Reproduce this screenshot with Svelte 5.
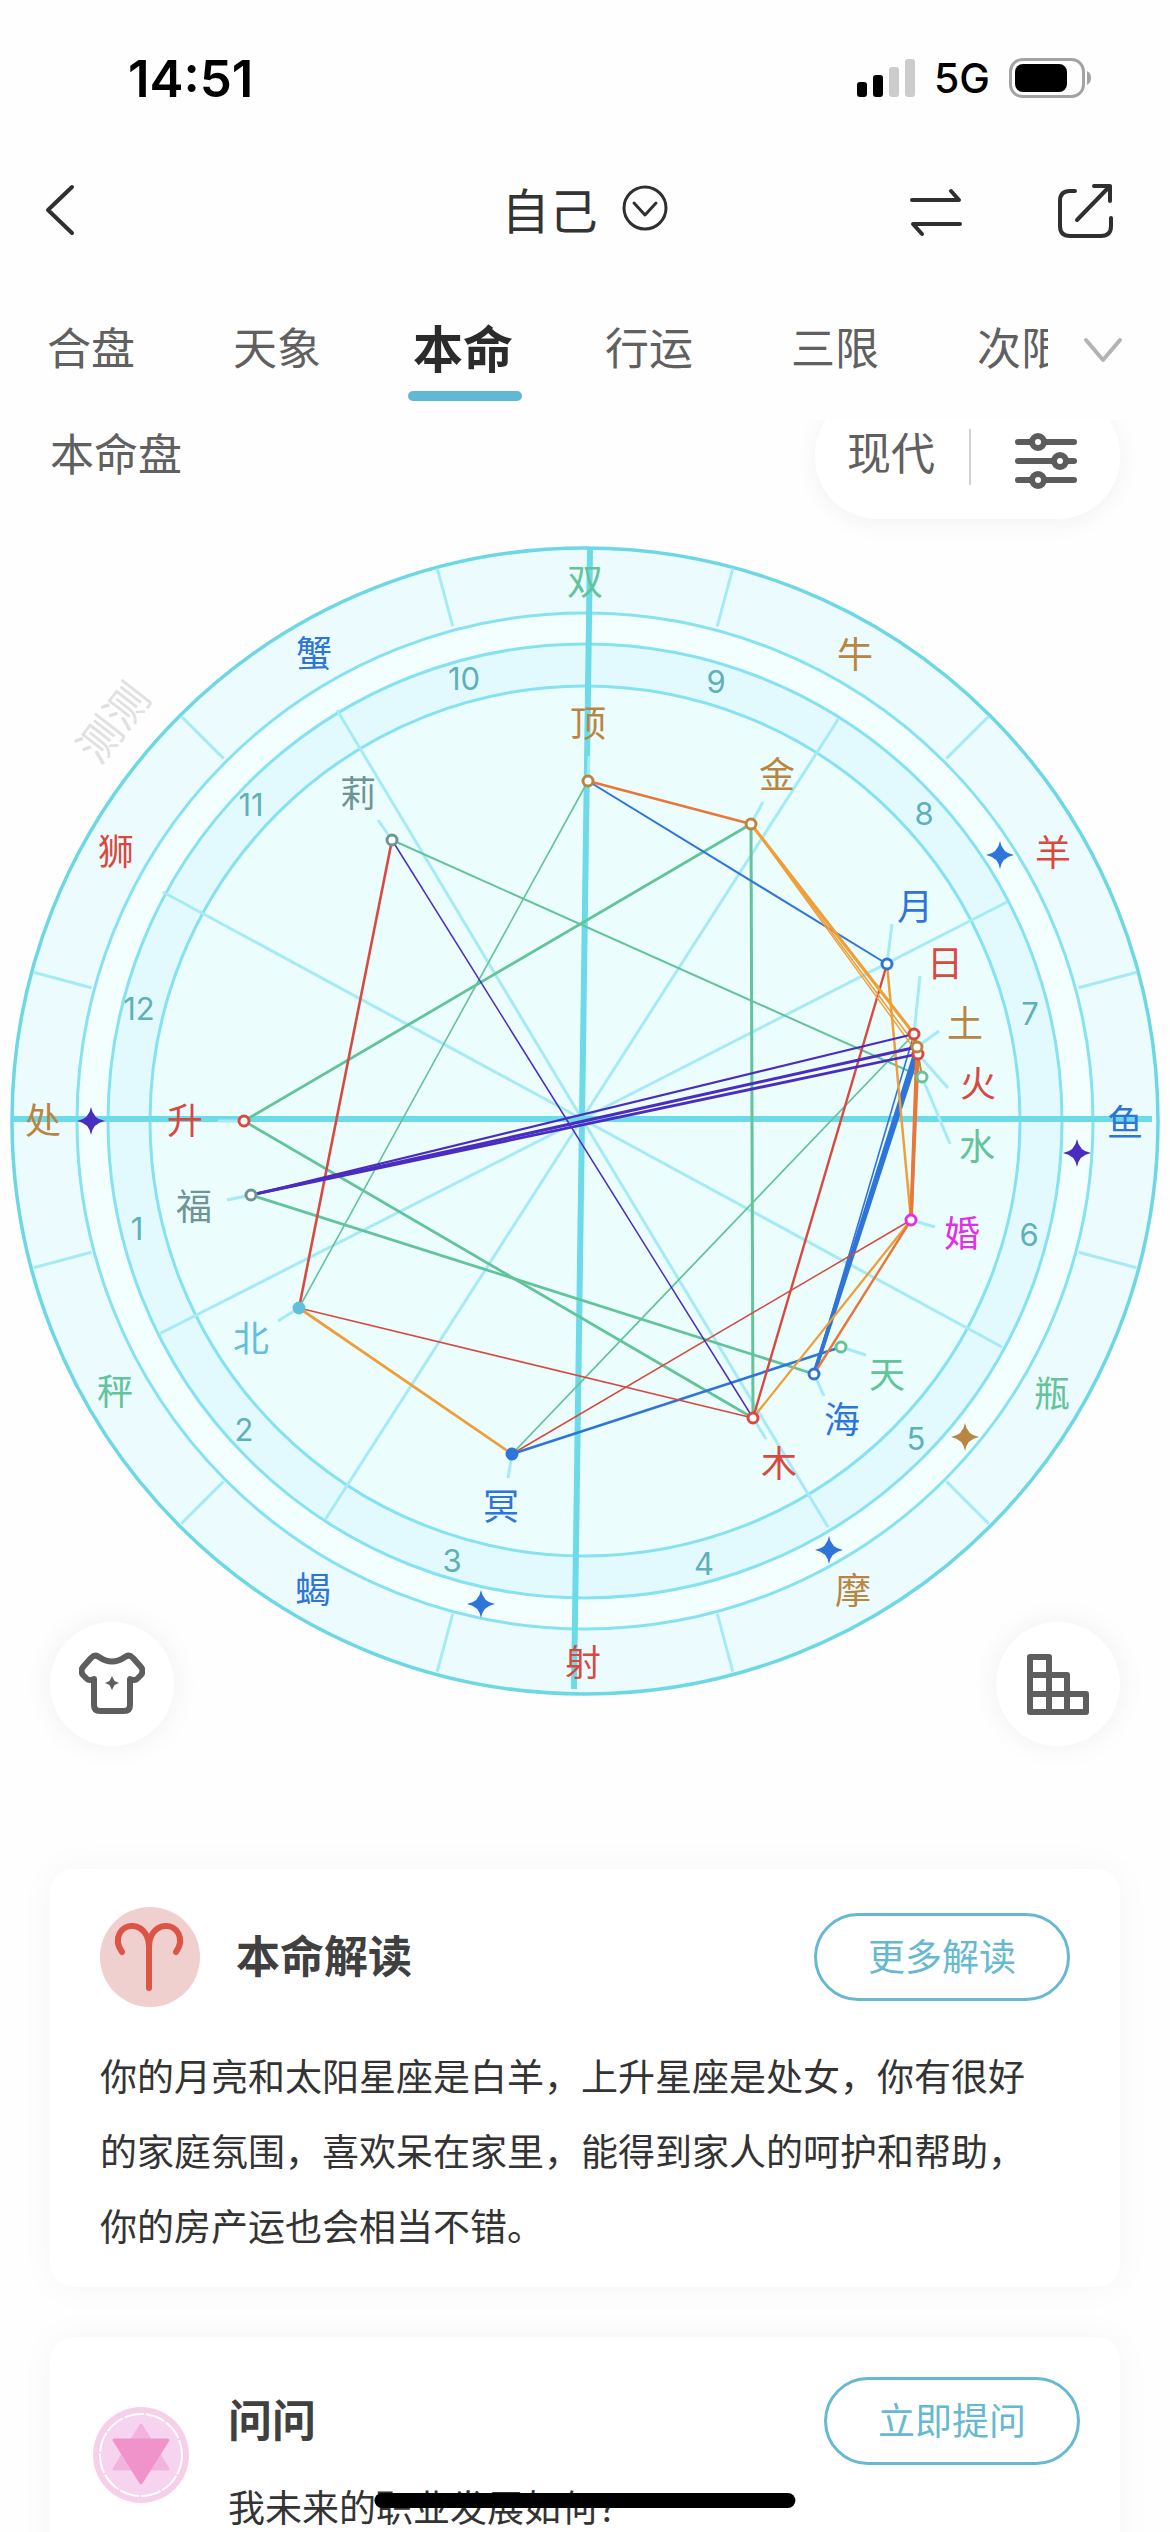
<script>
  const tabs = ['合盘', '天象', '本命', '行运', '三限', '次限'];
  let active = $state('本命');

  const C = {
    red: '#d9493f', blue: '#2f74d8', green: '#63c39a', brown: '#b98642',
    grey: '#6f9496', sky: '#62bfdc', pink: '#e22fe8', indigo: '#4a2dc0',
    orange: '#ee9f38', flame: '#ea7638'
  };

  const cx = 585, cy = 1121;
  const ticks = Array.from({ length: 12 }, (_, i) => {
    const a = ((15 + i * 30) * Math.PI) / 180;
    return [cx + 511 * Math.cos(a), 1120 + 511 * Math.sin(a), cx + 571 * Math.cos(a), 1120 + 571 * Math.sin(a)];
  });

  const cusps = [
    [337, 710], [163, 892], [839, 718], [1007, 902],
    [159, 1334], [325, 1520], [828, 1527], [1002, 1347]
  ];

  const signs = [
    ['双', 585, 582, C.green], ['蟹', 314, 654, C.blue], ['牛', 855, 655, C.brown],
    ['羊', 1053, 853, C.red], ['鱼', 1125, 1123, C.blue], ['瓶', 1052, 1394, C.green],
    ['摩', 853, 1591, C.brown], ['射', 583, 1663, C.red], ['蝎', 313, 1590, C.blue],
    ['秤', 115, 1392, C.green], ['处', 43, 1121, C.brown], ['狮', 116, 852, C.red]
  ];

  const houses = [
    [137, 1229], [244, 1430], [452, 1561], [704, 1564], [916, 1439], [1029, 1235],
    [1030, 1014], [924, 814], [716, 682], [464, 679], [251, 805], [139, 1009]
  ];

  // name: [node x, node y, stub x, stub y, label x, label y, colour, filled]
  const planets = {
    顶: [588, 781, 589, 756, 588, 724, C.brown],
    金: [751, 824, 763, 802, 777, 775, C.brown],
    月: [887, 964, 892, 924, 915, 907, C.blue],
    日: [914, 1034, 920, 976, 945, 964, C.red],
    火: [918, 1054, 948, 1088, 978, 1084, C.red],
    土: [917, 1047, 939, 1031, 965, 1024, C.brown],
    水: [922, 1077, 950, 1144, 977, 1147, C.green],
    升: [244, 1121, 218, 1121, 185, 1121, C.red],
    福: [251, 1195, 227, 1200, 194, 1207, C.grey],
    北: [299, 1308, 278, 1321, 251, 1339, C.sky, true],
    冥: [512, 1454, 508, 1478, 501, 1507, C.blue, true],
    莉: [392, 840, 378, 820, 358, 794, C.grey],
    婚: [911, 1220, 935, 1227, 962, 1234, C.pink],
    天: [841, 1347, 866, 1355, 887, 1375, C.green],
    海: [814, 1374, 824, 1396, 842, 1420, C.blue],
    木: [753, 1418, 766, 1439, 779, 1464, C.red]
  };

  const aspects = [
    ['顶', '北', C.green, 1.6], ['升', '金', C.green, 2.8], ['金', '木', C.green, 3],
    ['莉', '水', C.green, 2], ['升', '木', C.green, 2.8], ['福', '海', C.green, 2.8],
    ['冥', '日', C.green, 1.8], ['顶', '月', C.blue, 2], ['冥', '天', C.blue, 2.6],
    ['海', '日', C.blue, 1.6], ['海', '土', C.blue, 3.8], ['海', '火', C.blue, 3.8],
    ['莉', '北', C.red, 2.6], ['月', '木', C.red, 2.4], ['北', '木', C.red, 1.7],
    ['冥', '婚', C.red, 1.5], ['北', '冥', C.orange, 2.8], ['金', '日', C.orange, 3.2],
    ['金', '土', C.orange, 1.6], ['金', '火', C.orange, 1.4], ['月', '婚', C.orange, 2.5],
    ['婚', '木', C.orange, 2.3], ['顶', '金', C.flame, 2.4], ['婚', '海', C.flame, 2.4],
    ['婚', '土', C.flame, 3.4], ['婚', '火', C.flame, 3.4], ['日', '火', C.flame, 4],
    ['土', '水', C.brown, 2], ['莉', '木', C.indigo, 1.5], ['福', '日', C.indigo, 2.2],
    ['福', '土', C.indigo, 3], ['福', '火', C.indigo, 2.8]
  ];

  const stars = [
    [91, 1121, C.indigo], [1000, 855, C.blue], [1077, 1153, C.indigo],
    [965, 1437, C.brown], [829, 1550, C.blue], [481, 1604, C.blue]
  ];
  const star = 'M0-14Q2-2 14 0Q2 2 0 14Q-2 2-14 0Q-2-2 0-14Z';
</script>

<div class="app">
  <header class="status">
    <time>14:51</time>
    <div class="signals">
      <svg width="58" height="38" viewBox="0 0 58 38" aria-hidden="true">
        <rect x="0" y="23" width="10" height="15" rx="3" />
        <rect x="16" y="16" width="10" height="22" rx="3" />
        <rect x="32" y="8" width="10" height="30" rx="3" fill="#ccc" />
        <rect x="48" y="0" width="10" height="38" rx="3" fill="#ccc" />
      </svg>
      <span>5G</span>
      <svg width="83" height="40" viewBox="0 0 83 40" aria-hidden="true">
        <rect x="1.5" y="1.5" width="73" height="37" rx="12" fill="none" stroke="#a3a3a3" stroke-width="3" />
        <rect x="6" y="6" width="52" height="28" rx="8" />
        <path d="M78 13q4 2 4 7t-4 7z" fill="#a3a3a3" />
      </svg>
    </div>
  </header>

  <nav class="bar">
    <button class="icon" aria-label="返回">
      <svg width="32" height="52" viewBox="0 0 32 52"><path d="M28 3L4 26L28 49" /></svg>
    </button>
    <button class="who">
      <span>自己</span>
      <svg width="46" height="46" viewBox="0 0 46 46"><circle cx="23" cy="23" r="21" /><path d="M12 18L23 30L34 18" /></svg>
    </button>
    <div class="actions">
      <button class="icon swap" aria-label="切换">
        <svg width="54" height="50" viewBox="0 0 54 50"><path d="M3 13H50L42 4M51 37H4L13 47" /></svg>
      </button>
      <button class="icon" aria-label="分享">
        <svg width="60" height="60" viewBox="0 0 60 60"><path d="M20 11H15Q5 11 5 21V46Q5 56 15 56H46Q56 56 56 46V38M39 6H55V21M54 7L22 40" /></svg>
      </button>
    </div>
  </nav>

  <div class="tabs">
    <div class="list" role="tablist">
      {#each tabs as tab}
        <button role="tab" class:on={tab === active} aria-selected={tab === active} onclick={() => (active = tab)}>{tab}</button>
      {/each}
    </div>
    <button class="icon more" aria-label="展开">
      <svg width="42" height="28" viewBox="0 0 42 28"><path d="M4 4L21 24L38 4" /></svg>
    </button>
  </div>

  <section class="sub">
    <h1>本命盘</h1>
    <div class="pill">
      <button>现代</button>
      <i></i>
      <button class="icon" aria-label="设置">
        <svg width="62" height="56" viewBox="0 0 62 56">
          <path d="M3 9H59M3 28H59M3 47H59" />
          <g fill="#fff"><circle cx="23" cy="9" r="6" /><circle cx="45" cy="28" r="6" /><circle cx="23" cy="47" r="6" /></g>
        </svg>
      </button>
    </div>
  </section>

  <section class="chart">
    <svg viewBox="0 530 1170 1240" role="img" aria-label="本命盘">
      <text class="mark" transform="translate(114 723) rotate(-52)" y="15">测测</text>
      <circle {cx} {cy} r="573" fill="#ecfcfe" stroke="#6dd7e4" stroke-width="3.5" />
      <circle {cx} {cy} r="508" fill="#f3ffff" stroke="#86e1f1" stroke-width="3" />
      <circle {cx} {cy} r="477" fill="#e2fafe" stroke="#86e1f1" stroke-width="3" />
      <circle {cx} {cy} r="435" fill="#ecfdfe" stroke="#86e1f1" stroke-width="3" />
      <g stroke="#a6eaf5" stroke-width="3">
        {#each ticks as [x1, y1, x2, y2]}<line {x1} {y1} {x2} {y2} />{/each}
        {#each cusps as [x, y]}<line x1="582" y1="1119" x2={x} y2={y} />{/each}
      </g>
      <path d="M13 1119H1152M590 549L574 1689" stroke="#6cdae8" stroke-width="6" />
      <g stroke="#a6eaf5" stroke-width="3">
        {#each Object.values(planets) as p}<line x1={p[0]} y1={p[1]} x2={p[2]} y2={p[3]} />{/each}
      </g>
      {#each aspects as [a, b, color, w]}
        <line x1={planets[a][0]} y1={planets[a][1]} x2={planets[b][0]} y2={planets[b][1]} stroke={color} stroke-width={w} />
      {/each}
      {#each Object.entries(planets) as [name, p]}
        <circle cx={p[0]} cy={p[1]} r="5" fill={p[7] ? p[6] : '#fff'} stroke={p[6]} stroke-width="3" />
        <text x={p[4]} y={p[5] + 13} fill={p[6]}>{name}</text>
      {/each}
      {#each signs as [name, x, y, color]}<text {x} y={y + 13} fill={color}>{name}</text>{/each}
      {#each houses as [x, y], i}<text class="num" {x} y={y + 11}>{i + 1}</text>{/each}
      {#each stars as [x, y, color]}<path d={star} transform="translate({x} {y})" fill={color} />{/each}
    </svg>
    <div class="tools">
      <button class="round" aria-label="换肤">
        <svg width="66" height="66" viewBox="0 0 66 66">
          <path d="M20 6Q33 15 46 6Q50 3 54 7L62 16Q65 20 62 24L58 28Q56 30 51 28V54Q51 60 45 60H21Q15 60 15 54V28Q10 30 8 28L4 24Q1 20 4 16L12 7Q16 3 20 6Z" />
          <path class="solid" d="M33 25L35.500 30L40 32L35.500 34L33 39L30.500 34L26 32L30.500 30Z" />
        </svg>
      </button>
      <button class="round" aria-label="表格">
        <svg width="62" height="62" viewBox="0 0 62 62"><path d="M3 4H22V59H3ZM3 22H40V59H3ZM3 41H59V59H3Z" /></svg>
      </button>
    </div>
  </section>

  <main>
    <article class="card">
      <div class="head">
        <svg width="100" height="100" viewBox="0 0 100 100" aria-hidden="true">
          <circle cx="50" cy="50" r="50" fill="#f0cfcf" />
          <path d="M22 45C12 31 22 18 33 19C44 20 49 30 49 40V81M49 40C49 30 54 20 65 19C76 18 86 31 76 45" fill="none" stroke="#dc5445" stroke-width="6" stroke-linecap="round" />
        </svg>
        <h2>本命解读</h2>
        <button class="cta">更多解读</button>
      </div>
      <p>你的月亮和太阳星座是白羊，上升星座是处女，你有很好的家庭氛围，喜欢呆在家里，能得到家人的呵护和帮助，你的房产运也会相当不错。</p>
    </article>

    <article class="card ask">
      <svg class="badge" width="96" height="96" viewBox="0 0 96 96" aria-hidden="true">
        <circle cx="48" cy="48" r="48" fill="#f5d0e8" />
        <circle cx="48" cy="48" r="41" fill="#f6d3ee" stroke="#fff" stroke-width="2" stroke-dasharray="20 2" />
        <g stroke-width="3" stroke-linejoin="round">
          <path d="M48 18L75 62H21Z" fill="#f1b4dc" stroke="#f1b4dc" />
          <path d="M48 76L21 33H75Z" fill="#ef93ca" stroke="#ef93ca" />
        </g>
      </svg>
      <div class="body">
        <div class="head">
          <h2>问问</h2>
          <button class="cta">立即提问</button>
        </div>
        <p>我未来的职业发展如何？</p>
      </div>
    </article>
  </main>

  <div class="home"></div>
</div>

<style>
  :global(body) { margin: 0; background: #fff; }
  .app {
    position: relative;
    height: 100vh;
    overflow: hidden;
    background: #fefefe;
    color: #333;
    font-family: "Noto Sans CJK SC", sans-serif;
  }
  button {
    padding: 0;
    border: 0;
    background: none;
    color: inherit;
    font: inherit;
    cursor: pointer;
  }
  svg { display: block; flex: none; }
  h1, h2, p { margin: 0; font-weight: 400; }
  .icon svg, .who svg, .round svg {
    fill: none;
    stroke: #2f2f2f;
    stroke-width: 4;
    stroke-linecap: round;
    stroke-linejoin: round;
  }

  .status {
    display: flex;
    justify-content: space-between;
    align-items: center;
    height: 156px;
    padding: 0 78px 0 128px;
    color: #000;
    font-family: Inter, sans-serif;
  }
  time { font-size: 51px; font-weight: 600; }
  .signals { display: flex; align-items: center; gap: 19px; font-size: 41px; font-weight: 500; }

  .bar {
    display: grid;
    grid-template-columns: 1fr auto 1fr;
    align-items: center;
    height: 108px;
    padding: 0 55px 0 44px;
  }
  .bar > .icon { justify-self: start; }
  .who { display: flex; align-items: center; gap: 24px; padding: 0 0 4px 10px; font-size: 48px; line-height: 60px; }
  .who svg { stroke-width: 3; }
  .actions { display: flex; align-items: center; justify-content: flex-end; gap: 92px; }
  .swap { padding-top: 4px; }

  .tabs {
    position: relative;
    z-index: 1;
    display: flex;
    align-items: center;
    height: 156px;
    background: #fefefe;
  }
  .list { display: flex; flex: 1; overflow: hidden; }
  .list button {
    position: relative;
    flex: 0 0 186px;
    height: 156px;
    padding: 8px 4px 0 0;
    color: #606060;
    font-size: 44px;
  }
  .list button.on { color: #2b2b2b; font-size: 50px; font-weight: 700; }
  .list button.on::after {
    content: "";
    position: absolute;
    left: 36px;
    right: 36px;
    bottom: 19px;
    height: 10px;
    border-radius: 5px;
    background: #61b8d4;
  }
  .more { padding: 16px 46px 0 34px; }
  .more svg { stroke: #b3b3b3; }

  .sub {
    display: flex;
    justify-content: space-between;
    align-items: center;
    height: 110px;
    padding: 0 50px;
    color: #606060;
    font-size: 44px;
  }
  h1 { padding-bottom: 46px; font-size: 44px; }
  .pill {
    display: flex;
    align-items: center;
    gap: 34px;
    height: 84px;
    margin-top: -38px;
    padding: 22px 43px 20px 32px;
    border-radius: 62px;
    background: #fff;
    box-shadow: 0 4px 24px rgba(0, 0, 0, .05);
  }
  .pill > button:first-child { padding-bottom: 12px; }
  .pill i { width: 2px; height: 56px; margin-right: 10px; background: #d2d2d2; }
  .pill .icon { padding-top: 8px; }
  .pill svg { stroke: #5c5c5c; stroke-width: 6; }

  .chart { position: relative; }
  .chart > svg { width: 100%; height: auto; }
  .chart text { font-size: 36px; text-anchor: middle; }
  .chart .num { fill: #5fb0b8; font-family: Inter, sans-serif; font-size: 31px; font-weight: 400; }
  .chart .mark { fill: #e0e0e0; font-size: 43px; }
  .tools {
    position: absolute;
    left: 50px;
    right: 50px;
    bottom: 24px;
    display: flex;
    justify-content: space-between;
  }
  .round {
    display: grid;
    place-items: center;
    width: 124px;
    height: 124px;
    border-radius: 50%;
    background: #fff;
    box-shadow: 0 0 30px rgba(0, 0, 0, .06);
  }
  .round svg { stroke: #5e5e5e; stroke-width: 6; }
  .round .solid { fill: #5e5e5e; stroke: none; }

  main { display: grid; gap: 50px; padding: 99px 50px 50px; }
  .card {
    padding: 38px 50px 24px;
    border-radius: 24px;
    background: #fff;
    box-shadow: 0 0 36px rgba(0, 0, 0, .04);
  }
  .head { display: flex; align-items: center; }
  h2 { flex: 1; padding-bottom: 6px; color: #404040; font-size: 44px; font-weight: 700; line-height: 60px; }
  .card svg + h2 { margin-left: 36px; }
  .cta {
    width: 256px;
    height: 88px;
    padding-bottom: 5px;
    border: 3px solid #66b9d0;
    border-radius: 44px;
    color: #66b9d0;
    font-size: 37px;
  }
  p { margin-top: 31px; padding-right: 24px; font-size: 37px; line-height: 75px; }
  .ask { display: flex; align-items: flex-start; gap: 39px; padding: 40px 40px 40px 43px; }
  .badge { margin-top: 30px; }
  .body { flex: 1; }
  .body p { margin-top: 4px; }

  .home {
    position: absolute;
    left: 50%;
    bottom: 24px;
    width: 36%;
    height: 15px;
    border-radius: 8px;
    background: #000;
    transform: translateX(-50%);
  }
</style>
